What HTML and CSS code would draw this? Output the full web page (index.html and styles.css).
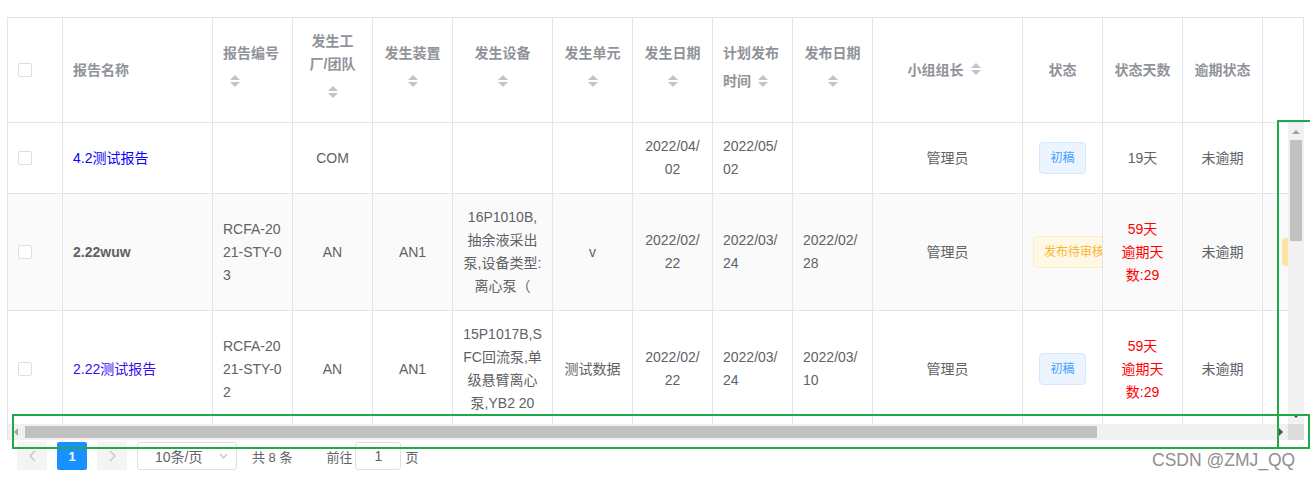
FILE: index.html
```html
<!DOCTYPE html>
<html lang="zh-CN">
<head>
<meta charset="utf-8">
<title>报告列表</title>
<link rel="stylesheet" href="styles.css">
</head>
<body>
<div class="page">
  <div class="table">
    <div class="thead">
      <div class="th sel"><div class="cell"><span class="checkbox"></span></div></div>
      <div class="th left"><div class="cell">报告名称</div></div>
      <div class="th left"><div class="cell">报告编号<div class="caret-row"><span class="caret"></span></div></div></div>
      <div class="th"><div class="cell">发生工<br>厂/团队<div class="caret-row"><span class="caret"></span></div></div></div>
      <div class="th"><div class="cell">发生装置<div class="caret-row"><span class="caret"></span></div></div></div>
      <div class="th"><div class="cell">发生设备<div class="caret-row"><span class="caret"></span></div></div></div>
      <div class="th"><div class="cell">发生单元<div class="caret-row"><span class="caret"></span></div></div></div>
      <div class="th"><div class="cell">发生日期<div class="caret-row"><span class="caret"></span></div></div></div>
      <div class="th left"><div class="cell">计划发布<div class="hline"><span>时间</span><span class="caret"></span></div></div></div>
      <div class="th"><div class="cell">发布日期<div class="caret-row"><span class="caret"></span></div></div></div>
      <div class="th"><div class="cell"><div class="hline"><span>小组组长</span><span class="caret"></span></div></div></div>
      <div class="th"><div class="cell">状态</div></div>
      <div class="th"><div class="cell">状态天数</div></div>
      <div class="th"><div class="cell">逾期状态</div></div>
      <div class="th"><div class="cell"></div></div>
    </div>

    <div class="tbody">
      <div class="viewport">
        <div class="tr">
          <div class="td sel"><div class="cell"><span class="checkbox"></span></div></div>
          <div class="td left"><div class="cell"><span class="link-a">4.2测试报告</span></div></div>
          <div class="td left"><div class="cell"></div></div>
          <div class="td"><div class="cell">COM</div></div>
          <div class="td"><div class="cell"></div></div>
          <div class="td"><div class="cell"></div></div>
          <div class="td"><div class="cell"></div></div>
          <div class="td"><div class="cell">2022/04/<br>02</div></div>
          <div class="td left"><div class="cell">2022/05/<br>02</div></div>
          <div class="td left"><div class="cell"></div></div>
          <div class="td"><div class="cell">管理员</div></div>
          <div class="td"><div class="cell"><span class="tag tag-blue">初稿</span></div></div>
          <div class="td"><div class="cell">19天</div></div>
          <div class="td"><div class="cell">未逾期</div></div>
          <div class="td"><div class="cell"></div></div>
        </div>
        <div class="tr striped">
          <div class="td sel"><div class="cell"><span class="checkbox"></span></div></div>
          <div class="td left"><div class="cell"><b class="strong">2.22wuw</b></div></div>
          <div class="td left"><div class="cell">RCFA-20<br>21-STY-0<br>3</div></div>
          <div class="td"><div class="cell">AN</div></div>
          <div class="td"><div class="cell">AN1</div></div>
          <div class="td"><div class="cell">16P1010B,<br>抽余液采出<br>泵,设备类型:<br>离心泵（</div></div>
          <div class="td"><div class="cell">v</div></div>
          <div class="td"><div class="cell">2022/02/<br>22</div></div>
          <div class="td left"><div class="cell">2022/03/<br>24</div></div>
          <div class="td left"><div class="cell">2022/02/<br>28</div></div>
          <div class="td"><div class="cell">管理员</div></div>
          <div class="td"><div class="cell"><span class="tag tag-warn">发布待审核</span></div></div>
          <div class="td"><div class="cell red">59天<br>逾期天<br>数:29</div></div>
          <div class="td"><div class="cell">未逾期</div></div>
          <div class="td edge"><div class="cell"><span class="peek"></span></div></div>
        </div>
        <div class="tr">
          <div class="td sel"><div class="cell"><span class="checkbox"></span></div></div>
          <div class="td left"><div class="cell"><span class="link-b">2.22测试报告</span></div></div>
          <div class="td left"><div class="cell">RCFA-20<br>21-STY-0<br>2</div></div>
          <div class="td"><div class="cell">AN</div></div>
          <div class="td"><div class="cell">AN1</div></div>
          <div class="td"><div class="cell">15P1017B,S<br>FC回流泵,单<br>级悬臂离心<br>泵,YB2 20</div></div>
          <div class="td"><div class="cell">测试数据</div></div>
          <div class="td"><div class="cell">2022/02/<br>22</div></div>
          <div class="td left"><div class="cell">2022/03/<br>24</div></div>
          <div class="td left"><div class="cell">2022/03/<br>10</div></div>
          <div class="td"><div class="cell">管理员</div></div>
          <div class="td"><div class="cell"><span class="tag tag-blue">初稿</span></div></div>
          <div class="td"><div class="cell red">59天<br>逾期天<br>数:29</div></div>
          <div class="td"><div class="cell">未逾期</div></div>
          <div class="td"><div class="cell"></div></div>
        </div>
      </div>
      <div class="vscroll">
        <div class="sbtn"><span class="tri tri-up"></span></div>
        <div class="vthumb"></div>
        <div class="fill"></div>
        <div class="sbtn"><span class="tri tri-down"></span></div>
      </div>
      <div class="hscroll">
        <div class="hbtn"><span class="tri tri-left"></span></div>
        <div class="hthumb"></div>
        <div class="fill"></div>
        <div class="hbtn"><span class="tri tri-right"></span></div>
      </div>
      <div class="corner"></div>
    </div>
  </div>

  <div class="pager">
    <button class="pbtn" type="button">
      <svg width="7" height="12" viewBox="0 0 7 12"><polyline points="6,1 1,6 6,11" fill="none" stroke="#c0c4cc" stroke-width="1.3"/></svg>
    </button>
    <button class="pbtn active" type="button">1</button>
    <button class="pbtn" type="button">
      <svg width="7" height="12" viewBox="0 0 7 12"><polyline points="1,1 6,6 1,11" fill="none" stroke="#c0c4cc" stroke-width="1.3"/></svg>
    </button>
    <div class="select">
      <span>10条/页</span>
      <svg class="arrow" width="9" height="6" viewBox="0 0 9 6"><polyline points="1,1 4.5,5 8,1" fill="none" stroke="#c0c4cc" stroke-width="1.2"/></svg>
    </div>
    <span class="total">共 8 条</span>
    <span class="jump">前往</span>
    <div class="jump-input">1</div>
    <span class="jump-tail">页</span>
  </div>

  <div class="mark mark-h"></div>
  <div class="mark mark-v"></div>
  <div class="watermark">CSDN @ZMJ_QQ</div>
</div>
</body>
</html>
```

FILE: styles.css
```css
html, body {
  margin: 0;
  padding: 0;
  width: 1310px;
  height: 479px;
  overflow: hidden;
  background: #fff;
}

body {
  font-family: "Liberation Sans", "Noto Sans CJK SC", sans-serif;
  font-size: 14px;
  color: #606266;
}

.page {
  position: relative;
  width: 1310px;
  height: 479px;
  padding: 17px 0 0 7px;
  box-sizing: border-box;
}

.table {
  width: 1297px;
  border-left: 1px solid #dfe6ec;
  border-top: 1px solid #dfe6ec;
  box-sizing: border-box;
}

.thead {
  display: grid;
  grid-template-columns: 55px 150px 80px 80px 80px 100px 80px 80px 80px 80px 150px 80px 80px 80px 41px;
}

.th, .td {
  display: flex;
  align-items: center;
  padding: 12px 0;
  border-right: 1px solid #dfe6ec;
  border-bottom: 1px solid #dfe6ec;
  box-sizing: border-box;
  min-width: 0;
}

.th {
  color: #909399;
  font-weight: 700;
  background: #fff;
}

.cell {
  width: 100%;
  padding: 0 10px;
  box-sizing: border-box;
  line-height: 23px;
  white-space: nowrap;
  overflow: hidden;
  text-align: center;
}

.left .cell {
  text-align: left;
}

.sel .cell {
  display: flex;
  align-items: center;
  height: 23px;
  text-align: left;
}

.checkbox {
  display: block;
  width: 14px;
  height: 14px;
  border: 1px solid #dcdfe6;
  border-radius: 2px;
  background: #fff;
  box-sizing: border-box;
}

.caret-row {
  height: 34px;
  font-size: 0;
  line-height: 0;
}

.caret {
  display: inline-block;
  position: relative;
  width: 24px;
  height: 34px;
  vertical-align: top;
}

.caret::before,
.caret::after {
  content: "";
  position: absolute;
  left: 7px;
  width: 0;
  height: 0;
  border: 5px solid transparent;
}

.caret::before {
  top: 5px;
  border-bottom-color: #c0c4cc;
}

.caret::after {
  bottom: 7px;
  border-top-color: #c0c4cc;
}

.hline {
  display: flex;
  align-items: center;
  justify-content: center;
  height: 34px;
}

.left .hline {
  justify-content: flex-start;
}

/* body */
.tbody {
  display: grid;
  grid-template-columns: 1280px 16px;
  grid-template-rows: 301px 16px;
}

.viewport {
  overflow: hidden;
  background: #fff;
}

.tr {
  display: grid;
  width: 1315px;
  grid-template-columns: 55px 150px 80px 80px 80px 100px 80px 80px 80px 80px 150px 80px 80px 80px 60px;
}

.tr.striped .td {
  background: #fafafa;
}

.link-a {
  color: #0a00ff;
}

.link-b {
  color: #3a0cf2;
}

.strong {
  font-weight: 700;
  color: #606266;
}

.red {
  color: #ff0000;
}

.tag {
  display: inline-block;
  height: 32px;
  line-height: 30px;
  padding: 0 10px;
  font-size: 12px;
  border: 1px solid;
  border-radius: 4px;
  box-sizing: border-box;
  vertical-align: middle;
  white-space: nowrap;
}

.tag-blue {
  background: #ecf5ff;
  border-color: #d3e8fd;
  color: #409eff;
}

.tag-warn {
  background: #fff8e6;
  border-color: #fdedc6;
  color: #fab52a;
}

.edge .cell {
  padding-left: 19px;
  display: flex;
  align-items: center;
}

.peek {
  display: block;
  width: 40px;
  height: 28px;
  border-radius: 4px;
  background: #fde39c;
}

/* scrollbars */
.vscroll {
  display: flex;
  flex-direction: column;
  background: #f1f1f1;
}

.sbtn {
  height: 17px;
  display: flex;
  align-items: center;
  justify-content: center;
  flex: none;
}

.vthumb {
  flex: none;
  height: 101px;
  margin: 0 2px 0 2px;
  background: #c1c1c1;
}

.fill {
  flex: 1;
}

.hscroll {
  display: flex;
  align-items: flex-start;
  background: #f1f1f1;
}

.hbtn {
  width: 15px;
  height: 16px;
  display: flex;
  align-items: center;
  justify-content: center;
  flex: none;
}

.hthumb {
  flex: none;
  width: 1072px;
  height: 12px;
  margin: 2px 0 0 2px;
  background: #c1c1c1;
}

.corner {
  background: #dcdcdc;
}

.tri {
  display: block;
  width: 0;
  height: 0;
  border: 4px solid transparent;
}

.tri-up {
  border-top: 0;
  border-bottom-color: #a3a3a3;
}

.tri-down {
  border-bottom: 0;
  border-top-color: #505050;
}

.tri-left {
  border-left: 0;
  border-right-color: #a3a3a3;
}

.tri-right {
  border-right: 0;
  border-left-color: #505050;
}

/* pagination */
.pager {
  display: flex;
  align-items: center;
  padding: 2px 5px;
  height: 28px;
  font-size: 13px;
  color: #606266;
}

.pbtn {
  width: 30px;
  height: 28px;
  margin: 0 5px;
  padding: 0;
  border: 0;
  border-radius: 2px;
  background: #f4f4f5;
  display: flex;
  align-items: center;
  justify-content: center;
  font-family: inherit;
  font-size: 13px;
}

.pbtn.active {
  background: #1890ff;
  color: #fff;
  font-weight: 700;
}

.select {
  width: 100px;
  height: 28px;
  margin-left: 5px;
  box-sizing: border-box;
  border: 1px solid #dcdfe6;
  border-radius: 3px;
  display: flex;
  align-items: center;
  justify-content: space-between;
  padding: 0 8px 0 17px;
  font-size: 14px;
}

.total {
  margin-left: 15px;
}

.jump {
  margin-left: 34px;
}

.jump-input {
  width: 46px;
  height: 28px;
  margin-left: 3px;
  box-sizing: border-box;
  border: 1px solid #dcdfe6;
  border-radius: 3px;
  display: flex;
  align-items: center;
  justify-content: center;
  font-size: 14px;
}

.jump-tail {
  margin-left: 4px;
}

/* annotation boxes drawn over the screenshot */
.mark {
  position: absolute;
  border: 2px solid #21a84a;
  box-sizing: border-box;
}

.mark-h {
  left: 12px;
  top: 414px;
  width: 1298px;
  height: 35px;
}

.mark-v {
  left: 1277px;
  top: 120px;
  width: 40px;
  height: 329px;
}

.watermark {
  position: absolute;
  left: 1152px;
  top: 449px;
  font-size: 17.5px;
  line-height: 22px;
  color: #8f8f8f;
  text-shadow: 0 0 1px #fff;
  white-space: nowrap;
}
```
